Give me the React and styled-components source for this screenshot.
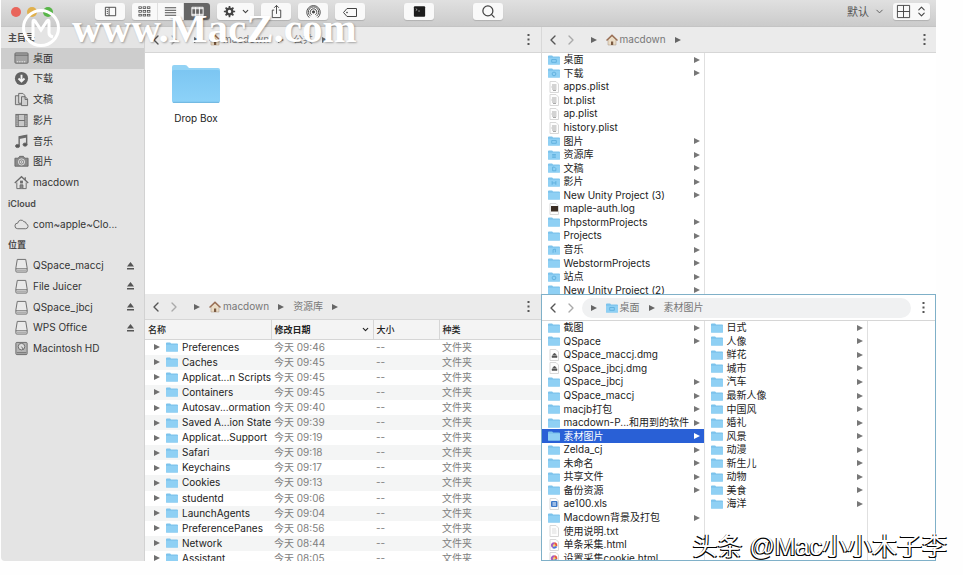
import { useState } from "react";
import styled, { createGlobalStyle, css } from "styled-components";
import { ChevronDown, ChevronLeft, ChevronRight, ChevronsUpDown, Search } from "lucide-react";

const favorites = [
  { name: "桌面", icon: "desktop" },
  { name: "下载", icon: "download" },
  { name: "文稿", icon: "documents" },
  { name: "影片", icon: "film" },
  { name: "音乐", icon: "music" },
  { name: "图片", icon: "camera" },
  { name: "macdown", icon: "home" },
];

const locations = [
  { name: "QSpace_maccj", icon: "disk", eject: true },
  { name: "File Juicer", icon: "disk", eject: true },
  { name: "QSpace_jbcj", icon: "disk", eject: true },
  { name: "WPS Office", icon: "disk", eject: true },
  { name: "Macintosh HD", icon: "internal" },
];

const homeFiles = [
  { name: "桌面", badge: "window" },
  { name: "下载", badge: "circle" },
  { name: "apps.plist", type: "plist" },
  { name: "bt.plist", type: "plist" },
  { name: "ap.plist", type: "plist" },
  { name: "history.plist", type: "plist" },
  { name: "图片", badge: "window" },
  { name: "资源库", badge: "lines" },
  { name: "文稿", badge: "page" },
  { name: "影片", badge: "film" },
  { name: "New Unity Project (3)" },
  { name: "maple-auth.log", type: "log" },
  { name: "PhpstormProjects" },
  { name: "Projects" },
  { name: "音乐", badge: "note" },
  { name: "WebstormProjects" },
  { name: "站点", badge: "circle" },
  { name: "New Unity Project (2)" },
];

const desktopFiles = [
  { name: "截图" },
  { name: "QSpace" },
  { name: "QSpace_maccj.dmg", type: "dmg" },
  { name: "QSpace_jbcj.dmg", type: "dmg" },
  { name: "QSpace_jbcj" },
  { name: "QSpace_maccj" },
  { name: "macjb打包" },
  { name: "macdown-P...和用到的软件" },
  { name: "素材图片" },
  { name: "Zelda_cj" },
  { name: "未命名" },
  { name: "共享文件" },
  { name: "备份资源" },
  { name: "ae100.xls", type: "xls" },
  { name: "Macdown背景及打包" },
  { name: "使用说明.txt", type: "txt" },
  { name: "单条采集.html", type: "html" },
  { name: "设置采集cookie.html", type: "html" },
];

const pictureFolders = [
  "日式", "人像", "鲜花", "城市", "汽车", "最新人像", "中国风",
  "婚礼", "风景", "动漫", "新生儿", "动物", "美食", "海洋",
].map((name) => ({ name }));

const libraryRows = [
  ["Preferences", "09:46"],
  ["Caches", "09:45"],
  ["Applicat...n Scripts", "09:45"],
  ["Containers", "09:45"],
  ["Autosav...ormation", "09:40"],
  ["Saved A...ion State", "09:39"],
  ["Applicat...Support", "09:19"],
  ["Safari", "09:18"],
  ["Keychains", "09:17"],
  ["Cookies", "09:13"],
  ["studentd", "09:06"],
  ["LaunchAgents", "09:04"],
  ["PreferencePanes", "08:56"],
  ["Network", "08:44"],
  ["Assistant", "08:05"],
];

const sidebarShapes = {
  desktop: (
    <>
      <rect x="1" y="2" width="14" height="11" rx="1" fill="#a2a2a2" />
      <path d="M1 4.5h14" />
      <path d="M3 11.5h10" stroke="#eee" strokeDasharray="1.5 1" />
    </>
  ),
  download: (
    <>
      <circle cx="8" cy="8" r="7" fill="#626262" stroke="none" />
      <path d="M8 4v7M4.8 8L8 11.2 11.2 8" stroke="#f2f2f2" strokeWidth="2" />
    </>
  ),
  documents: (
    <>
      <path d="M5.500 4h-4v9.500H8" fill="#d2d2d2" />
      <path d="M5 1.500h4.500l2 2V12H5z" fill="#dcdcdc" />
      <path d="M8 5h4l2.500 2.500v7H8z" fill="#cfcfcf" />
      <path d="M11.800 5v3h2.700" />
    </>
  ),
  film: (
    <>
      <rect x="2" y="1.500" width="12" height="13" fill="#c9c9c9" />
      <path d="M4.500 1.500v13M11.500 1.500v13M4.500 8h7" />
      <path d="M3.200 2v12M12.800 2v12" strokeDasharray="1 1" />
    </>
  ),
  music: (
    <>
      <path d="M5.500 12.500V3l8-1.500v9.500" strokeWidth="1.500" />
      <path d="M5.500 4l8-1.500" strokeWidth="2.500" />
      <ellipse cx="3.800" cy="12.800" rx="2.200" ry="1.700" fill="#555" />
      <ellipse cx="11.800" cy="11.300" rx="2.200" ry="1.700" fill="#555" />
    </>
  ),
  camera: (
    <>
      <path d="M1 4.500h3.500L6 2.500h4l1.500 2H15v8.500H1z" fill="#8a8a8a" />
      <circle cx="8" cy="8.500" r="3.300" stroke="#e0e0e0" />
      <circle cx="8" cy="8.500" r="1.300" stroke="#e0e0e0" />
    </>
  ),
  home: (
    <>
      <path d="M3 8v6.500h10V8" />
      <path d="M.8 8.500L8 1.800l7.200 6.700M12 5V2.500" strokeWidth="1.300" />
      <path d="M6.500 14.500v-4h3v4" fill="#888" />
      <rect x="7" y="6.500" width="2" height="2" />
    </>
  ),
  cloud: <path d="M4 12.500h8.500a2.700 2.700 0 0 0 .5-5.300A2.300 2.300 0 0 0 10.600 5 3.600 3.600 0 0 0 4 6.500a3 3 0 0 0 0 6z" />,
  disk: (
    <>
      <path d="M3.500 1.500h9l1.500 9v3.500a1 1 0 0 1-1 1H3a1 1 0 0 1-1-1v-3.500z" fill="#e9e9e9" />
      <path d="M2 11.500h12" />
      <path d="M2.500 13.300h11" stroke="#aaa" />
    </>
  ),
  internal: (
    <>
      <rect x="2" y="1.500" width="12" height="13" rx="1" fill="#b4b4b4" />
      <circle cx="8" cy="6" r="3.500" fill="#ddd" />
      <path d="M8 6l2 3M3 12.500h10" />
    </>
  ),
};

const SidebarIcon = ({ name }) => (
  <svg width="15" height="15" viewBox="0 0 16 16" fill="none" stroke="#6a6a6a" strokeWidth="1" aria-hidden="true">
    {sidebarShapes[name]}
  </svg>
);

const badgeShapes = {
  window: "M4 4.500h5v3H4z",
  circle: "M6.500 4a2 2 0 1 1 0 4 2 2 0 0 1 0-4z",
  lines: "M4.500 4.500h4M4.500 6h4M4.500 7.500h4",
  page: "M5 4h2l1.500 1.500V8H5z",
  film: "M4.500 4v4M8.500 4v4M4.500 6h4",
  note: "M5.500 8V4.500L8 4v3.500",
};

const Folder = ({ badge }) => (
  <svg width="12" height="10" viewBox="0 0 13 10" aria-hidden="true">
    <path d="M0 1q0-1 1-1h3.500l1 1.200H12q1 0 1 1V9q0 1-1 1H1Q0 10 0 9z" fill="#7cc3ec" />
    <path d="M0 2.500h13V9q0 1-1 1H1Q0 10 0 9z" fill="#8fd0f4" />
    {badge && <path d={badgeShapes[badge]} fill="none" stroke="#5fb0dd" />}
  </svg>
);

const FileIcon = ({ type }) => (
  <svg width="12" height="12" viewBox="0 0 12 12" aria-hidden="true">
    <path d="M2 .5h6L10.500 3v8.500H2z" fill="#fdfdfd" stroke="#d8d8d8" />
    {type === "plist" && <path d="M4 4h4.500M3.500 6h5M4 8h4.500M5 9.500h3" stroke="#aaa" strokeWidth="1.200" />}
    {type === "log" && <path d="M3 3h7v5.500H3z" fill="#3b2d23" />}
    {type === "dmg" && <path d="M4 8.500h5V6.800H4zM5 5.500L6.500 4 8 5.500V6H5z" fill="#555" stroke="#555" strokeWidth=".5" />}
    {type === "xls" && (
      <>
        <rect x="3" y="3" width="6.500" height="6" rx="1" fill="#3c78c8" />
        <path d="M4.500 5h3.500M4.500 7h3.500" stroke="#fff" />
      </>
    )}
    {type === "txt" && <path d="M4 4h4M4 6h4.500M4 8h4.500" stroke="#ddd" />}
    {type === "html" && (
      <>
        <path d="M6.200 6.500V3.200a3.200 3.200 0 0 1 3 4.300z" fill="#e8543f" />
        <path d="M6.200 6.500l3 1.200a3.200 3.200 0 0 1-5 1.300z" fill="#4a76d8" />
        <path d="M6.200 6.500L4.200 9a3.200 3.200 0 0 1 2-5.800z" fill="#a55cc0" />
        <circle cx="6.200" cy="6.500" r="1.300" fill="#f5d76e" />
      </>
    )}
  </svg>
);

const Triangle = () => (
  <svg width="6" height="6" viewBox="0 0 6 6" fill="currentColor" aria-hidden="true">
    <path d="M0 0l6 3-6 3z" />
  </svg>
);

const HomeBadge = () => (
  <svg width="12" height="12" viewBox="0 0 12 12" aria-hidden="true">
    <path d="M2 5.500L6 2l4 3.500V11H2z" fill="#eadcc6" stroke="#a5937c" strokeWidth=".5" />
    <path d="M.5 6.500L6 1.200l5.500 5.300" fill="none" stroke="#9a6f55" strokeWidth="1.500" />
    <path d="M5 11V7.500h2.200V11z" fill="#7b5a41" />
  </svg>
);

const Dots = () => (
  <svg width="3" height="11" viewBox="0 0 3 11" fill="#555" aria-hidden="true">
    <rect x=".5" width="2" height="2" />
    <rect x=".5" y="4.500" width="2" height="2" />
    <rect x=".5" y="9" width="2" height="2" />
  </svg>
);

const toolShapes = {
  panel: <path d="M2.500 3.500h11v9h-11zM6.500 3.500v9M4 6h1.200M4 8h1.200M4 10h1.200" />,
  grid: (
    <>
      {[4, 8, 12].map((y) =>
        [2, 6.500, 11].map((x) => (
          <rect key={`${x}-${y}`} x={x} y={y - 1} width="2.800" height="1.800" strokeWidth=".8" />
        ))
      )}
    </>
  ),
  list: <path d="M2 4h12M2 6.700h12M2 9.300h12M2 12h12" />,
  columns: <path d="M2 3.500h12v9H2zM6 3.500v9M10 3.500v9M2 5h12M2 11h12" />,
  gear: (
    <>
      <circle cx="8" cy="8" r="3" strokeWidth="2.400" />
      <path d="M8 2v2.400M2 8h2.400M3.800 3.800l1.700 1.700M12.200 3.800l-1.700 1.700" strokeWidth="1.800" />
      <path d="M8 14v-2.400M14 8h-2.400M12.200 12.200l-1.700-1.700M3.800 12.200l1.700-1.700" strokeWidth="1.800" />
    </>
  ),
  share: <path d="M5.500 6.500h-2v8h9v-8h-2M8 10.500V1.500M5.500 4L8 1.500 10.500 4" />,
  airdrop: (
    <>
      <circle cx="8" cy="8.500" r="1.200" fill="#444" />
      <path d="M6 11.500a3.500 3.500 0 1 1 4 0M4.800 13a5.500 5.500 0 1 1 6.400 0M3.500 14.500a7.200 7.200 0 1 1 9 0" />
    </>
  ),
  tag: (
    <>
      <path d="M1.500 8.500l3.500-4h9.500v8H5z" />
      <circle cx="5" cy="8.500" r=".5" />
    </>
  ),
  terminal: (
    <>
      <rect x="2" y="2.500" width="12" height="11" rx="1" fill="#1d1d1d" stroke="none" />
      <path d="M4 5l1.500 1L4 7M6.500 7.500h2" stroke="#ccc" strokeWidth=".7" />
    </>
  ),
  panes: <path d="M1.500 1.500h13v13h-13zM8 1.500v13M1.500 8h13" />,
};

const ToolIcon = ({ name, size = 15 }) => (
  <svg width={size} height={size} viewBox="0 0 16 16" fill="none" stroke="currentColor" strokeWidth="1" aria-hidden="true">
    {toolShapes[name]}
  </svg>
);

const PathBar = ({ crumbs, active }) => (
  <PathHeader $active={active}>
    <NavButton aria-label="后退"><ChevronLeft size={16} strokeWidth={2} /></NavButton>
    <NavButton aria-label="前进" $dim><ChevronRight size={16} strokeWidth={2} /></NavButton>
    <Crumbs $active={active}>
      <Triangle />
      {crumbs.map(({ name, icon }) => (
        <Crumb key={name}>
          <CrumbLink href="#">
            {icon === "home" && <HomeBadge />}
            {icon === "folder" && <Folder badge="window" />}
            {name}
          </CrumbLink>
          {!(active && name === crumbs[crumbs.length - 1].name) && <Triangle />}
        </Crumb>
      ))}
    </Crumbs>
    <MoreButton aria-label="更多"><Dots /></MoreButton>
  </PathHeader>
);

const FileColumn = ({ files, selected, onSelect }) => (
  <Column>
    {files.map((file) => (
      <li key={file.name}>
        <FileButton $selected={file.name === selected} onClick={() => onSelect?.(file.name)}>
          {file.type ? <FileIcon type={file.type} /> : <Folder badge={file.badge} />}
          <FileName $selected={file.name === selected}>{file.name}</FileName>
          {!file.type && <Triangle />}
        </FileButton>
      </li>
    ))}
  </Column>
);

const SidebarItem = ({ name, icon, eject, current, onSelect }) => (
  <SidebarRow $current={current}>
    <SidebarButton onClick={() => onSelect(name)}>
      <SidebarIcon name={icon} />
      {name}
    </SidebarButton>
    {eject && (
      <EjectButton aria-label={`推出 ${name}`}>
        <svg width="7" height="8" viewBox="0 0 7 8" fill="#555" aria-hidden="true">
          <path d="M3.500 0L7 4.500H0zM0 6h7v1.500H0z" />
        </svg>
      </EjectButton>
    )}
  </SidebarRow>
);

const App = () => {
  const [place, setPlace] = useState("桌面");
  const [selected, setSelected] = useState("素材图片");
  const [view, setView] = useState("columns");

  return (
    <>
      <GlobalStyle />
      <Window>
        <Toolbar>
          <Lights>
            <Light $color="#e9655b" aria-label="关闭" />
            <Light $color="#e0b04c" aria-label="最小化" />
            <Light $color="#58b548" aria-label="缩放" />
          </Lights>
          <ToolGroup>
            <ToolButton aria-label="边栏"><ToolIcon name="panel" /></ToolButton>
            <Segmented>
              {["grid", "list", "columns"].map((name) => (
                <Segment key={name} aria-label={name} aria-pressed={view === name} onClick={() => setView(name)}>
                  <ToolIcon name={name} />
                </Segment>
              ))}
            </Segmented>
            <ToolButton aria-label="操作" $wide>
              <ToolIcon name="gear" />
              <ChevronDown size={9} strokeWidth={3} />
            </ToolButton>
            <ToolButton aria-label="共享"><ToolIcon name="share" /></ToolButton>
            <ToolButton aria-label="隔空投送"><ToolIcon name="airdrop" /></ToolButton>
            <ToolButton aria-label="标签"><ToolIcon name="tag" size={16} /></ToolButton>
          </ToolGroup>
          <ToolButton aria-label="终端"><ToolIcon name="terminal" /></ToolButton>
          <ToolButton aria-label="搜索"><Search size={15} strokeWidth={2} /></ToolButton>
          <Workspace>
            <WorkspaceSelect aria-label="工作区" defaultValue="默认">
              <option>默认</option>
            </WorkspaceSelect>
            <ChevronDown size={11} />
          </Workspace>
          <ToolButton aria-label="窗格布局" $wide>
            <ToolIcon name="panes" />
            <ChevronsUpDown size={13} strokeWidth={2} />
          </ToolButton>
        </Toolbar>

        <Body>
          <Sidebar>
            <SidebarList>
              <SidebarTitle>主目录</SidebarTitle>
              {favorites.map((item) => (
                <SidebarItem key={item.name} {...item} current={item.name === place} onSelect={setPlace} />
              ))}
              <SidebarTitle>iCloud</SidebarTitle>
              <SidebarItem name="com~apple~Clo..." icon="cloud" onSelect={setPlace} />
              <SidebarTitle>位置</SidebarTitle>
              {locations.map((item) => (
                <SidebarItem key={item.name} {...item} current={item.name === place} onSelect={setPlace} />
              ))}
            </SidebarList>
          </Sidebar>

          <Panes>
            <Pane>
              <PathBar crumbs={[{ name: "macdown", icon: "home" }, { name: "公共" }]} />
              <IconGrid>
                <IconItem>
                  <svg width="48" height="38" viewBox="0 0 48 38" aria-hidden="true">
                    <defs>
                      <linearGradient id="folder" x1="0" y1="0" x2="0" y2="1">
                        <stop offset="0" stopColor="#7cc6f2" />
                        <stop offset="1" stopColor="#8dd2f8" />
                      </linearGradient>
                    </defs>
                    <path d="M0 2q0-2 2-2h11q2 0 3 2l1 1h29q2 0 2 2v5H0z" fill="#93d3f5" />
                    <path d="M0 7q0-2 2-2h44q2 0 2 2v29q0 2-2 2H2q-2 0-2-2z" fill="url(#folder)" />
                    <path d="M1 37.300h46" stroke="#6db5de" />
                  </svg>
                  Drop Box
                </IconItem>
              </IconGrid>
            </Pane>

            <Pane $divided>
              <PathBar crumbs={[{ name: "macdown", icon: "home" }]} />
              <Columns>
                <FileColumn files={homeFiles} />
              </Columns>
            </Pane>

            <Pane>
              <PathBar crumbs={[{ name: "macdown", icon: "home" }, { name: "资源库" }]} />
              <Table>
                <colgroup>
                  <NameCol />
                  <DateCol />
                  <SizeCol />
                  <col />
                </colgroup>
                <thead>
                  <tr>
                    <HeadCell>名称</HeadCell>
                    <HeadCell $sorted>
                      <SortLabel>
                        修改日期
                        <ChevronDown size={9} strokeWidth={3} />
                      </SortLabel>
                    </HeadCell>
                    <HeadCell>大小</HeadCell>
                    <HeadCell>种类</HeadCell>
                  </tr>
                </thead>
                <tbody>
                  {libraryRows.map(([name, time]) => (
                    <Row key={name}>
                      <Cell>
                        <NameCell>
                          <Expand aria-label={`展开 ${name}`}><Triangle /></Expand>
                          <Folder />
                          {name}
                        </NameCell>
                      </Cell>
                      <Cell $muted>今天 {time}</Cell>
                      <Cell $muted>--</Cell>
                      <Cell $muted>文件夹</Cell>
                    </Row>
                  ))}
                </tbody>
              </Table>
            </Pane>

            <Pane $active>
              <PathBar active crumbs={[{ name: "桌面", icon: "folder" }, { name: "素材图片" }]} />
              <Columns>
                <FileColumn files={desktopFiles} selected={selected} onSelect={setSelected} />
                <FileColumn files={pictureFolders} />
              </Columns>
            </Pane>
          </Panes>
        </Body>
      </Window>

      <SiteMark>
        <svg width="40" height="40" viewBox="0 0 40 40" fill="none" stroke="#fff" aria-hidden="true">
          <circle cx="20" cy="20" r="17.500" strokeWidth="3" />
          <path d="M12 32V14q0-3 2-1l6 9 6-9q2-2 2 1v11q0 3 4 4" strokeWidth="3" />
        </svg>
        www.MacZ.com
      </SiteMark>
      <AuthorMark>头条 @Mac小小木子李</AuthorMark>
    </>
  );
};

const GlobalStyle = createGlobalStyle`
  * {
    box-sizing: border-box;
  }

  body {
    margin: 0;
    background: #fefefe;
    color: #222;
    font-family: Inter, "Noto Sans CJK SC", sans-serif;
    font-size: 10px;
    line-height: 13px;
    overflow: hidden;
  }

  button,
  select {
    margin: 0;
    padding: 0;
    border: 0;
    background: none;
    color: inherit;
    font: inherit;
  }

  ul {
    margin: 0;
    padding: 0;
    list-style: none;
  }

  svg {
    display: block;
    flex-shrink: 0;
  }
`;

const Window = styled.main`
  height: calc(100vh - 14px);
  margin: 0 27px 14px 1px;
  display: flex;
  flex-direction: column;
  overflow: hidden;
`;

const Toolbar = styled.header`
  height: 27px;
  flex-shrink: 0;
  padding: 3px 6px 0 10px;
  display: flex;
  align-items: flex-start;
  background: linear-gradient(#e0e0e0, #cbcbcb);
  border-bottom: 1px solid #c4c4c4;
`;

const Lights = styled.div`
  display: flex;
  gap: 6px;
  margin: 4px 42px 0 0;
`;

const Light = styled.button`
  width: 10px;
  height: 10px;
  border-radius: 50%;
  background: ${({ $color }) => $color};
`;

const ToolGroup = styled.div`
  display: flex;
  gap: 7px;
`;

const toolSurface = css`
  height: 17px;
  border-radius: 3px;
  background: #f9f9f9;
  box-shadow: 0 1px 1px rgba(0, 0, 0, 0.15);
  color: #444;
`;

const ToolButton = styled.button`
  ${toolSurface}
  width: ${({ $wide }) => ($wide ? "37px" : "30px")};
  flex-shrink: 0;
  display: flex;
  align-items: center;
  justify-content: center;
  gap: ${({ $wide }) => ($wide ? "4px" : "0")};

  ${ToolGroup} + & {
    margin: 0 39px;
  }
`;

const Segmented = styled.div`
  ${toolSurface}
  display: flex;
  overflow: hidden;
`;

const Segment = styled.button`
  width: 26px;
  display: flex;
  align-items: center;
  justify-content: center;
  border-right: 1px solid #e0e0e0;

  &[aria-pressed="true"] {
    background: #666;
    color: #fff;
    border: 0;
  }
`;

const Workspace = styled.label`
  height: 17px;
  margin: 0 8px 0 auto;
  display: flex;
  align-items: center;
  gap: 5px;
  color: #555;
`;

const WorkspaceSelect = styled.select`
  width: 22px;
  appearance: none;
  font-size: 11px;
  line-height: 16px;
`;

const Body = styled.div`
  flex: 1;
  min-height: 0;
  display: flex;
`;

const Sidebar = styled.nav`
  width: 144px;
  flex-shrink: 0;
  background: #e4e4e4;
  border-right: 1px solid #d2d2d2;
  border-bottom-left-radius: 4px;
`;

const SidebarList = styled.ul`
  height: 332px;
  display: grid;
  grid-auto-rows: 1fr;
`;

const SidebarTitle = styled.li`
  padding-left: 7px;
  display: flex;
  align-items: center;
  color: #4c4c4c;
  font-size: 9px;
  font-weight: 600;
`;

const SidebarRow = styled.li`
  padding: 0 10px 0 13px;
  display: flex;
  align-items: center;
  justify-content: space-between;
  background: ${({ $current }) => ($current ? "#cdcdcd" : "transparent")};
`;

const SidebarButton = styled.button`
  display: flex;
  align-items: center;
  gap: 4px;
  color: #333;
  text-align: left;
`;

const EjectButton = styled.button`
  display: flex;
`;

const Panes = styled.div`
  flex: 1;
  min-width: 0;
  display: grid;
  grid-template-columns: repeat(2, minmax(0, 1fr));
  grid-template-rows: repeat(2, minmax(0, 1fr));
  background: #fff;
`;

const Pane = styled.section`
  display: flex;
  flex-direction: column;
  overflow: hidden;
  ${({ $divided }) => $divided && "border-left: 1px solid #d8d8d8;"}
  ${({ $active }) => $active && "border: 1px solid #7fb0c8;"}
`;

const PathHeader = styled.div`
  height: 26px;
  flex-shrink: 0;
  padding-left: 2px;
  display: flex;
  align-items: center;
  background: ${({ $active }) => ($active ? "#fff" : "#ebebeb")};
  border-bottom: 1px solid #d6d6d6;
`;

const NavButton = styled.button`
  width: 18px;
  display: flex;
  justify-content: center;
  color: ${({ $dim }) => ($dim ? "#aaa" : "#555")};
`;

const Crumbs = styled.nav`
  flex: 1;
  height: 20px;
  margin-left: 2px;
  padding-left: 9px;
  display: flex;
  align-items: center;
  border-radius: 10px;
  background: ${({ $active }) => ($active ? "#f0f1f2" : "transparent")};
  color: #666;
`;

const Crumb = styled.span`
  display: flex;
  align-items: center;
`;

const CrumbLink = styled.a`
  margin: 0 9px;
  display: flex;
  align-items: center;
  gap: 2px;
  color: #777;
  font-size: 10px;
  text-decoration: none;
`;

const MoreButton = styled.button`
  width: 24px;
  display: flex;
  justify-content: center;
`;

const IconGrid = styled.div`
  padding-top: 12px;
  display: grid;
  grid-template-columns: repeat(auto-fill, 102px);
`;

const IconItem = styled.button`
  display: flex;
  flex-direction: column;
  align-items: center;
  gap: 9px;
`;

const Columns = styled.div`
  flex: 1;
  min-height: 0;
  display: flex;
  overflow: hidden;
`;

const Column = styled.ul`
  flex: 1;
  max-width: 163px;
  height: 244px;
  min-height: 100%;
  display: grid;
  grid-template-rows: repeat(18, 1fr);
  border-right: 1px solid #e0e0e0;
`;

const FileButton = styled.button`
  width: 100%;
  height: 100%;
  padding: 0 4px 0 6px;
  display: flex;
  align-items: center;
  gap: 4px;
  background: ${({ $selected }) => ($selected ? "#2960d6" : "transparent")};
  color: ${({ $selected }) => ($selected ? "#fff" : "#777")};
  text-align: left;
`;

const FileName = styled.span`
  flex: 1;
  white-space: nowrap;
  color: ${({ $selected }) => ($selected ? "#fff" : "#222")};
`;

const Table = styled.table`
  width: 100%;
  height: 246px;
  flex-shrink: 0;
  table-layout: fixed;
  border-collapse: collapse;
`;

const NameCol = styled.col`
  width: 126px;
`;

const DateCol = styled.col`
  width: 102px;
`;

const SizeCol = styled.col`
  width: 66px;
`;

const HeadCell = styled.th`
  height: 19px;
  padding: 0 3px;
  background: #f4f4f4;
  border-bottom: 1px solid #d6d6d6;
  font-size: 9px;
  font-weight: ${({ $sorted }) => ($sorted ? 700 : 500)};
  text-align: left;

  & + & {
    border-left: 1px solid #d6d6d6;
  }
`;

const SortLabel = styled.span`
  display: flex;
  align-items: center;
  justify-content: space-between;
`;

const Row = styled.tr`
  &:nth-child(even) {
    background: #f4f5f5;
  }
`;

const Cell = styled.td`
  padding: 0 0 0 3px;
  color: ${({ $muted }) => ($muted ? "#808080" : "#222")};
  white-space: nowrap;
`;

const NameCell = styled.span`
  padding-left: 3px;
  display: flex;
  align-items: center;
  gap: 4px;
`;

const Expand = styled.button`
  width: 11px;
  flex-shrink: 0;
  display: flex;
  justify-content: center;
  color: #707070;
`;

const SiteMark = styled.div`
  position: absolute;
  top: 8px;
  left: 21px;
  display: flex;
  align-items: center;
  gap: 11px;
  color: #fff;
  font-family: "Liberation Serif", serif;
  font-size: 41px;
  font-weight: 700;
  line-height: 40px;
  text-shadow: 1px 1px 2px rgba(0, 0, 0, 0.3);
  pointer-events: none;
`;

const AuthorMark = styled.div`
  position: absolute;
  right: 16px;
  bottom: 12px;
  color: #fff;
  font-family: "Liberation Sans", "Noto Sans CJK SC", sans-serif;
  font-size: 25px;
  line-height: 34px;
  text-shadow: -1px 1px 0 #000, 1px 1px 0 #000;
  pointer-events: none;
`;

export default App;
